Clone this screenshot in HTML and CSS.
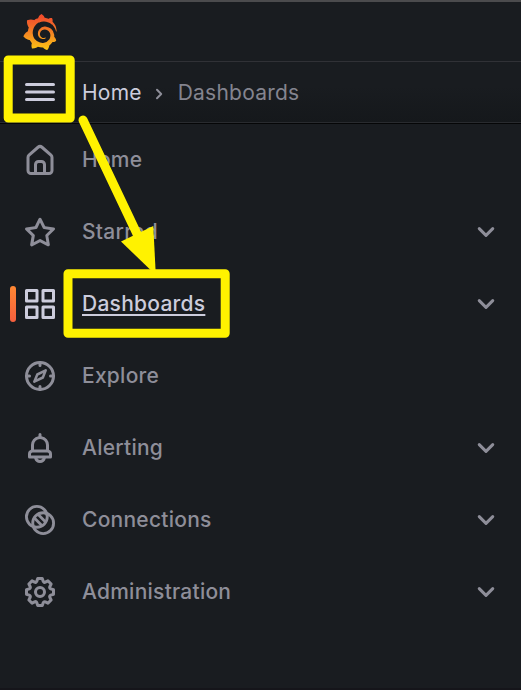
FILE: index.html
```html
<!DOCTYPE html>
<html lang="en">
<head>
<meta charset="utf-8">
<title>Dashboards - Grafana</title>
<link rel="stylesheet" href="styles.css">
</head>
<body>
<header class="topbar">
  <svg class="logo" viewBox="0 0 24 24">
    <defs><linearGradient id="flame" x1="0" y1="0" x2="0" y2="1"><stop offset="0" stop-color="#f0472c"/><stop offset=".3" stop-color="#f26529"/><stop offset="1" stop-color="#fbc614"/></linearGradient></defs>
    <path fill="url(#flame)" d="M23.02 10.59a8.578 8.578 0 0 0-.862-3.034 8.911 8.911 0 0 0-1.789-2.445c.337-1.342-.413-2.505-.413-2.505-1.292-.08-2.113.4-2.416.62-.052-.02-.102-.044-.154-.064-.22-.089-.446-.172-.677-.247-.231-.073-.47-.14-.711-.197a9.867 9.867 0 0 0-.875-.161C14.557.753 12.94 0 12.94 0c-1.804 1.145-2.147 2.744-2.147 2.744l-.018.093c-.098.029-.2.057-.298.088-.138.042-.275.094-.413.143-.138.055-.275.107-.41.166a8.869 8.869 0 0 0-1.557.87l-.063-.029c-2.497-.955-4.716.195-4.716.195-.203 2.658.996 4.33 1.235 4.636a11.608 11.608 0 0 0-.607 2.635C1.636 12.677.953 15.014.953 15.014c1.926 2.214 4.171 2.351 4.171 2.351.003-.002.006-.002.006-.005.285.509.615.994.986 1.446.156.19.32.371.488.548-.704 2.009.099 3.68.099 3.68 2.144.08 3.553-.937 3.849-1.173a9.784 9.784 0 0 0 3.164.501h.08l.055-.003.107-.002.103-.005.003.002c1.01 1.44 2.788 1.646 2.788 1.646 1.264-1.332 1.337-2.653 1.337-2.94v-.058c0-.02-.003-.039-.003-.06.265-.187.52-.387.758-.6a7.875 7.875 0 0 0 1.415-1.7c1.43.083 2.437-.885 2.437-.885-.236-1.49-1.085-2.216-1.264-2.354l-.018-.013-.016-.013a.217.217 0 0 1-.031-.02c.008-.092.016-.18.02-.27.011-.162.016-.323.016-.48v-.253l-.005-.098-.008-.135a1.891 1.891 0 0 0-.01-.13c-.003-.042-.008-.083-.013-.125l-.016-.124-.018-.122a6.215 6.215 0 0 0-2.032-3.73 6.015 6.015 0 0 0-3.222-1.46 6.292 6.292 0 0 0-.85-.048l-.107.002h-.063l-.044.003-.104.008a4.777 4.777 0 0 0-3.335 1.695c-.332.4-.592.84-.768 1.297a4.594 4.594 0 0 0-.312 1.817l.003.091c.005.055.007.11.013.164a3.615 3.615 0 0 0 .698 1.82 3.53 3.53 0 0 0 1.827 1.282c.33.098.66.14.971.137.039 0 .078 0 .114-.002l.063-.003c.02 0 .041-.003.062-.003.034-.002.065-.007.099-.01.007 0 .018-.003.028-.003l.031-.005.06-.008a1.18 1.18 0 0 0 .112-.02c.036-.008.072-.013.109-.024a2.634 2.634 0 0 0 .914-.415c.028-.02.056-.041.085-.065a.248.248 0 0 0 .039-.35.244.244 0 0 0-.309-.06l-.078.042c-.09.044-.184.083-.283.116a2.476 2.476 0 0 1-.475.096c-.028.003-.054.006-.083.006l-.083.002c-.026 0-.054 0-.08-.002l-.102-.006h-.012l-.024.006c-.016-.003-.031-.003-.044-.006-.031-.002-.06-.007-.091-.01a2.59 2.59 0 0 1-.724-.213 2.557 2.557 0 0 1-.667-.438 2.52 2.52 0 0 1-.805-1.475 2.306 2.306 0 0 1-.029-.444l.006-.122v-.023l.002-.031c.003-.021.003-.04.005-.06a3.163 3.163 0 0 1 1.352-2.29 3.12 3.12 0 0 1 .937-.43 2.946 2.946 0 0 1 .776-.101h.06l.07.002.045.003h.026l.07.005a4.041 4.041 0 0 1 1.635.49 3.94 3.94 0 0 1 1.602 1.662 3.77 3.77 0 0 1 .397 1.414l.005.076.003.075c.002.026.002.05.002.075 0 .024.003.052 0 .07v.065l-.002.073-.008.174a6.195 6.195 0 0 1-.08.639 5.1 5.1 0 0 1-.267.927 5.31 5.31 0 0 1-.624 1.13 5.052 5.052 0 0 1-3.237 2.014 4.82 4.82 0 0 1-.649.066l-.039.003h-.287a6.607 6.607 0 0 1-1.716-.265 6.776 6.776 0 0 1-3.4-2.274 6.75 6.75 0 0 1-.746-1.15 6.616 6.616 0 0 1-.714-2.596l-.005-.083-.002-.02v-.056l-.003-.073v-.096l-.003-.104v-.07l.003-.163c.008-.22.026-.45.054-.678a8.707 8.707 0 0 1 .28-1.355c.128-.444.286-.872.473-1.277a7.04 7.04 0 0 1 1.456-2.1 5.925 5.925 0 0 1 .953-.763c.169-.111.343-.213.524-.306.089-.05.182-.091.273-.135.047-.02.093-.042.138-.062a7.177 7.177 0 0 1 .714-.267l.145-.045c.049-.015.098-.026.148-.041.098-.029.197-.052.296-.076.049-.013.1-.02.15-.033l.15-.032.151-.028.076-.013.075-.01.153-.024c.057-.01.114-.013.171-.023l.169-.021c.036-.003.073-.008.106-.01l.073-.008.036-.003.042-.002c.057-.003.114-.008.171-.01l.086-.006h.023l.037-.003.145-.007a7.999 7.999 0 0 1 1.708.125 7.917 7.917 0 0 1 2.048.68 8.253 8.253 0 0 1 1.672 1.09l.09.077.089.078c.06.052.114.107.171.159.057.052.112.106.166.16.052.055.107.107.159.164a8.671 8.671 0 0 1 1.41 1.978c.012.026.028.052.04.078l.04.078.075.156c.023.051.05.1.07.153l.065.15a8.848 8.848 0 0 1 .45 1.34.19.19 0 0 0 .201.142.186.186 0 0 0 .172-.184c.01-.246.002-.532-.024-.856z"/>
  </svg>
</header>
<div class="crumbbar">
  <svg class="icon menu line" viewBox="0 0 24 24"><path d="M3 7h18M3 12h18M3 17h18"/></svg>
  <span class="crumb-home">Home</span>
  <svg class="separator line" viewBox="0 0 24 24"><path d="M10 7.8 14.2 12 10 16.2"/></svg>
  <span class="crumb-current">Dashboards</span>
</div>
<nav class="nav">
  <a class="item">
    <svg class="icon" viewBox="0 0 24 24"><path d="M20,8h0L14,2.74a3,3,0,0,0-4,0L4,8a3,3,0,0,0-1,2.26V19a3,3,0,0,0,3,3H18a3,3,0,0,0,3-3V10.25A3,3,0,0,0,20,8ZM14,20H10V15a1,1,0,0,1,1-1h2a1,1,0,0,1,1,1Zm5-1a1,1,0,0,1-1,1H16V15a3,3,0,0,0-3-3H11a3,3,0,0,0-3,3v5H6a1,1,0,0,1-1-1V10.25a1,1,0,0,1,.34-.75l6-5.25a1,1,0,0,1,1.32,0l6,5.25a1,1,0,0,1,.34.75Z"/></svg>
    <span class="label">Home</span>
  </a>
  <a class="item">
    <svg class="icon" viewBox="0 0 24 24"><path d="M22,9.67A1,1,0,0,0,21.14,9l-5.69-.83L12.9,3a1,1,0,0,0-1.8,0L8.55,8.16,2.86,9a1,1,0,0,0-.81.68,1,1,0,0,0,.25,1l4.13,4-1,5.68A1,1,0,0,0,6.9,21.44L12,18.77l5.1,2.67a.93.93,0,0,0,.46.12,1,1,0,0,0,.59-.19,1,1,0,0,0,.4-1l-1-5.68,4.13-4A1,1,0,0,0,22,9.67Zm-6.15,4a1,1,0,0,0-.29.88l.72,4.2-3.76-2a1.06,1.06,0,0,0-.94,0l-3.76,2,.72-4.2a1,1,0,0,0-.29-.88l-3-3,4.21-.61a1,1,0,0,0,.76-.55L12,5.7l1.88,3.82a1,1,0,0,0,.76.55l4.21.61Z"/></svg>
    <span class="label">Starred</span>
    <svg class="chevron line" viewBox="0 0 24 24"><path d="m7.5 9.75 4.5 4.5 4.5-4.5"/></svg>
  </a>
  <a class="item active">
    <svg class="icon line" viewBox="0 0 24 24"><path d="M3 3h7v7H3zM14 3h7v7h-7zM3 14h7v7H3zM14 14h7v7h-7z"/></svg>
    <span class="label">Dashboards</span>
    <svg class="chevron line" viewBox="0 0 24 24"><path d="m7.5 9.75 4.5 4.5 4.5-4.5"/></svg>
  </a>
  <a class="item">
    <svg class="icon line" viewBox="0 0 24 24"><circle cx="12" cy="12" r="9"/><path d="M12 3v2M12 19v2M3 12h2M19 12h2"/><path class="needle" d="m15.8 8.2-1.9 4.8-5.7 2.8 2-4.8z"/></svg>
    <span class="label">Explore</span>
  </a>
  <a class="item">
    <svg class="icon" viewBox="0 0 24 24"><path d="M18,13.18V10a6,6,0,0,0-5-5.91V3a1,1,0,0,0-2,0V4.09A6,6,0,0,0,6,10v3.18A3,3,0,0,0,4,16v2a1,1,0,0,0,1,1H8.14a4,4,0,0,0,7.72,0H19a1,1,0,0,0,1-1V16A3,3,0,0,0,18,13.18ZM8,10a4,4,0,0,1,8,0v3H8Zm4,10a2,2,0,0,1-1.72-1h3.44A2,2,0,0,1,12,20Zm6-3H6V16a1,1,0,0,1,1-1H17a1,1,0,0,1,1,1Z"/></svg>
    <span class="label">Alerting</span>
    <svg class="chevron line" viewBox="0 0 24 24"><path d="m7.5 9.75 4.5 4.5 4.5-4.5"/></svg>
  </a>
  <a class="item">
    <svg class="icon line rings" viewBox="0 0 24 24"><circle cx="9.9" cy="9.9" r="6.95"/><circle cx="14.1" cy="14.1" r="6.95"/><path d="m8.9 11.3 3.8 3.8M11.3 8.9l3.8 3.8"/></svg>
    <span class="label">Connections</span>
    <svg class="chevron line" viewBox="0 0 24 24"><path d="m7.5 9.75 4.5 4.5 4.5-4.5"/></svg>
  </a>
  <a class="item">
    <svg class="icon" viewBox="0 0 24 24"><path d="M21.32,9.55l-1.89-.63.89-1.78A1,1,0,0,0,20.13,6L18,3.87a1,1,0,0,0-1.15-.19l-1.78.89-.63-1.89A1,1,0,0,0,13.5,2h-3a1,1,0,0,0-.95.68L8.92,4.57,7.14,3.68A1,1,0,0,0,6,3.87L3.87,6a1,1,0,0,0-.19,1.15l.89,1.78-1.89.63A1,1,0,0,0,2,10.5v3a1,1,0,0,0,.68.95l1.89.63-.89,1.78A1,1,0,0,0,3.87,18L6,20.13a1,1,0,0,0,1.15.19l1.78-.89.63,1.89a1,1,0,0,0,.95.68h3a1,1,0,0,0,.95-.68l.63-1.89,1.78.89A1,1,0,0,0,18,20.13L20.13,18a1,1,0,0,0,.19-1.15l-.89-1.78,1.89-.63A1,1,0,0,0,22,13.5v-3A1,1,0,0,0,21.32,9.55ZM20,12.78l-1.2.4A2,2,0,0,0,17.64,16l.57,1.14-1.1,1.1L16,17.64a2,2,0,0,0-2.79,1.16l-.4,1.2H11.22l-.4-1.2A2,2,0,0,0,8,17.64l-1.14.57-1.1-1.1L6.36,16A2,2,0,0,0,5.2,13.18L4,12.78V11.22l1.2-.4A2,2,0,0,0,6.36,8L5.79,6.89l1.1-1.1L8,6.36A2,2,0,0,0,10.82,5.2l.4-1.2h1.56l.4,1.2A2,2,0,0,0,16,6.36l1.14-.57,1.1,1.1L17.64,8a2,2,0,0,0,1.16,2.79l1.2.4ZM12,8a4,4,0,1,0,4,4A4,4,0,0,0,12,8Zm0,6a2,2,0,1,1,2-2A2,2,0,0,1,12,14Z"/></svg>
    <span class="label">Administration</span>
    <svg class="chevron line" viewBox="0 0 24 24"><path d="m7.5 9.75 4.5 4.5 4.5-4.5"/></svg>
  </a>
</nav>
<svg class="annotations" viewBox="0 0 521 690">
  <rect x="8.2" y="60" width="62" height="58"/>
  <rect x="68" y="273.8" width="157.2" height="59.5"/>
  <path d="m83 120 56 118"/>
  <polygon points="121,241.5 153.3,226 155.8,275"/>
</svg>
</body>
</html>
```

FILE: styles.css
```css
* { box-sizing: border-box; }

body {
  margin: 0;
  height: 690px;
  position: relative;
  overflow: hidden;
  display: flex;
  flex-direction: column;
  background: #191c20;
  border-bottom: 2px solid #15151a;
  color: #8e8e99;
  font: 500 21px/32px Inter, "Liberation Sans", sans-serif;
  letter-spacing: 0.25px;
}

.topbar {
  height: 62px;
  padding: 12px 22px 0;
  border-top: 2px solid #4b4b4d;
  border-bottom: 1px solid #303136;
}

.logo { display: block; width: 36px; height: 36px; }

.crumbbar {
  height: 62px;
  display: flex;
  align-items: center;
  padding: 0 22px;
  background: linear-gradient(#191c20 40%, #15181b);
  border-bottom: 1px solid #050607;
  box-shadow: inset 0 -1px #292b2f;
  font-weight: 400;
  letter-spacing: 0.22px;
}

.crumb-home { color: #ccccdc; }
.crumb-current { color: #84848f; }

.icon {
  flex: none;
  width: 36px;
  height: 36px;
  margin-right: 24px;
  fill: currentColor;
}

.menu { color: #ccccdc; margin-bottom: 1px; }

.line {
  fill: none;
  stroke: currentColor;
  stroke-width: 2;
  stroke-linecap: round;
  stroke-linejoin: round;
}

.separator {
  width: 24px;
  height: 24px;
  margin: 2px 7px 0 5px;
}

.needle { stroke-width: 1.7; }
.rings { stroke-width: 1.9; }

.item {
  height: 72px;
  display: flex;
  align-items: center;
  padding: 0 17px 0 22px;
}

.active { color: #ccccdc; }

.active::before {
  content: "";
  width: 6px;
  height: 36px;
  margin: 0 6px 0 -12px;
  border-radius: 3px;
  background: linear-gradient(#ff8833, #f55f3e);
}

.active .label {
  text-decoration: underline;
  text-decoration-thickness: 2px;
  text-underline-offset: 3px;
  text-decoration-skip-ink: none;
}

.chevron {
  width: 36px;
  height: 36px;
  margin-left: auto;
  color: #8e8e99;
}

.annotations {
  position: absolute;
  inset: 0;
  width: 521px;
  height: 690px;
  fill: none;
  stroke: #fff200;
  stroke-width: 9;
  stroke-linecap: round;
  stroke-linejoin: round;
}

.annotations polygon { fill: #fff200; stroke: none; }
```
